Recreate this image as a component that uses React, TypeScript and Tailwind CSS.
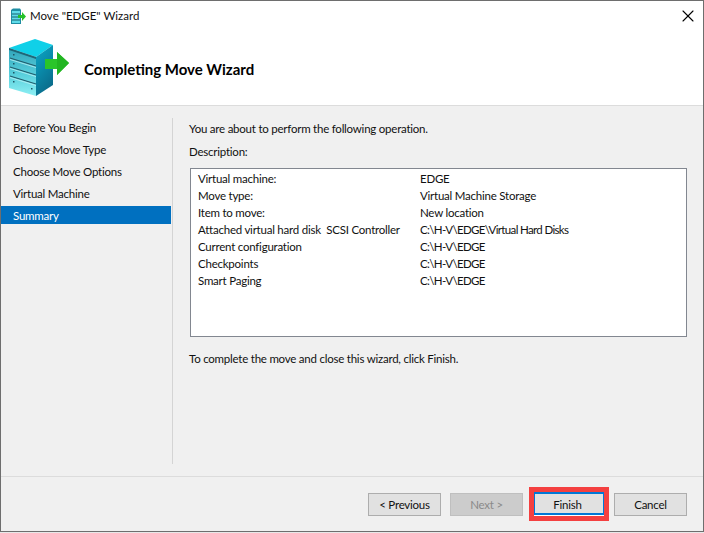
import React from 'react';
import { X } from 'lucide-react';

const steps = ['Before You Begin', 'Choose Move Type', 'Choose Move Options', 'Virtual Machine', 'Summary'];

const summary = [
  ['Virtual machine:', 'EDGE'],
  ['Move type:', 'Virtual Machine Storage'],
  ['Item to move:', 'New location'],
  ['Attached virtual hard disk  SCSI Controller', 'C:\\H-V\\EDGE\\Virtual Hard Disks'],
  ['Current configuration', 'C:\\H-V\\EDGE'],
  ['Checkpoints', 'C:\\H-V\\EDGE'],
  ['Smart Paging', 'C:\\H-V\\EDGE'],
];

const ServerIcon: React.FC<{ className: string }> = ({ className }) => (
  <svg viewBox="0 0 61 58" className={className}>
    <defs>
      <linearGradient id="side" x1="0" y1="0" x2="0.4" y2="1">
        <stop offset="0" stopColor="#0aa9c9" />
        <stop offset="1" stopColor="#0a6d8c" />
      </linearGradient>
      <linearGradient id="front" x1="0" y1="0" x2="0" y2="1">
        <stop offset="0" stopColor="#2fa3b9" />
        <stop offset="0.55" stopColor="#58cfdc" />
        <stop offset="1" stopColor="#8ff0f4" />
      </linearGradient>
    </defs>
    <path d="M0 9 L26 0 L44 6 L27 18 Z" fill="#10d0e8" />
    <path d="M27 18 L44 6 L44 46 L27 57 Z" fill="url(#side)" />
    <path d="M0 9 L27 18 L27 57 L0 49 Z" fill="url(#front)" />
    <path d="M0 9 L27 18 L27 20 L0 11 Z" fill="#1f6677" />
    <path d="M1 19 L27 27 M1 28 L27 36 M1 37 L27 45" stroke="#245c6c" strokeWidth="1.2" fill="none" />
    <path d="M1 20.5 L27 28.5 M1 29.5 L27 37.5 M1 38.5 L27 46.5" stroke="#bdf1f5" strokeWidth="0.8" fill="none" />
    <path d="M4 15h1.5v1.5H4zM4 24h1.5v1.5H4zM4 33h1.5v1.5H4zM4 42h1.5v1.5H4zM22 49h1.5v1.5H22z" fill="#1e5666" />
    <path d="M36 20 H48 V13 L60 24 L48 36 V30 H36 Z" fill="#2ac52a" />
    <path d="M48 13 L60 24 L48 36 Z" fill="#22b522" />
  </svg>
);

const SmallIcon: React.FC = () => (
  <svg viewBox="0 0 16 17" className="w-4 h-[17px]">
    <path d="M1 2 L3 0.5 H10 L11 2 V16 H1 Z" fill="#1f8da3" />
    <rect x="2" y="3" width="8" height="12" fill="#5fdcea" />
    <path d="M2 6h8M2 9h8M2 12h8" stroke="#17606f" strokeWidth="1" />
    <path d="M8 7 H12 V4 L16 8.5 L12 13 V10 H8 Z" fill="#25c02a" />
  </svg>
);

const Btn: React.FC<{ label: string; disabled?: boolean; focused?: boolean }> = ({ label, disabled, focused }) => (
  <button
    className={`flex items-center justify-center h-[23px] pt-[2px] ${
      focused
        ? 'w-[70px] pr-[3px] border-x border-x-[#0078d7] border-y-2 border-y-[#0078d7] bg-[#e1e1e1] text-[#111]'
        : disabled
          ? 'w-[73px] border border-[#bfbfbf] bg-[#cccccc] text-[#8a8a8a]'
          : 'w-[73px] border border-[#adadad] bg-[#e1e1e1] text-[#111]'
    }`}
  >
    {label}
  </button>
);

export default function App() {
  return (
    <div className="w-[704px] h-[533px] bg-[#e8e8e8] font-['Lato','Noto_Sans',sans-serif] text-[11.5px] tracking-[-0.23px] leading-none text-[#111]">
      <div className="h-[532px] flex flex-col bg-[#f0f0f0] border border-[#6e6e6e]">
        <div className="bg-white h-[104px] flex flex-col border-b border-[#dcdcdc] box-content">
          <div className="flex items-center h-[30px] pl-[9px] pr-[5px]">
            <SmallIcon />
            <span className="ml-[4px] tracking-normal">Move "EDGE" Wizard</span>
            <X className="ml-auto w-5 h-5 text-black" strokeWidth={1.3} />
          </div>
          <div className="flex items-start pl-[8px]">
            <ServerIcon className="w-[61px] h-[58px] mt-[8px]" />
            <h1 className="ml-[14px] mt-[31px] text-[15px] tracking-normal font-bold text-black">Completing Move Wizard</h1>
          </div>
        </div>

        <div className="flex h-[370px]">
          <div className="w-[170px] pt-[12px] flex flex-col gap-1">
            {steps.map((s) => (
              <div
                key={s}
                className={`h-[18px] flex items-center pl-3 pt-[2px] ${s === 'Summary' ? 'bg-[#0070c0] text-white' : ''}`}
              >
                {s}
              </div>
            ))}
          </div>
          <div className="w-px h-[346px] mt-[12px] ml-[1px] bg-[#d4d4d4]" />
          <div className="flex-1 pl-[16px] pr-[16px] pt-[17px]">
            <p className="h-[12px] flex items-center">You are about to perform the following operation.</p>
            <p className="mt-[11px] h-[12px] flex items-center">Description:</p>
            <div className="mt-[10px] ml-px h-[169px] border border-[#828790] bg-white pl-[7px] pt-[1px]">
              {summary.map(([k, v]) => (
                <div key={k} className="h-[17px] flex items-center whitespace-pre">
                  <span className="w-[222px]">{k}</span>
                  <span className={v.startsWith('C:') ? 'tracking-[-0.65px]' : ''}>{v}</span>
                </div>
              ))}
            </div>
            <p className="mt-[16px] h-[12px] flex items-center">To complete the move and close this wizard, click Finish.</p>
          </div>
        </div>

        <div className="flex-1 border-t border-[#dcdcdc] flex items-center justify-end pr-[16px]">
          <Btn label="< Previous" />
          <div className="ml-[9px]">
            <Btn label="Next >" disabled />
          </div>
          <div className="ml-[6px] border-[5px] border-[#f44040] bg-white pb-px">
            <Btn label="Finish" focused />
          </div>
          <div className="ml-[5px]">
            <Btn label="Cancel" />
          </div>
        </div>
      </div>
    </div>
  );
}
